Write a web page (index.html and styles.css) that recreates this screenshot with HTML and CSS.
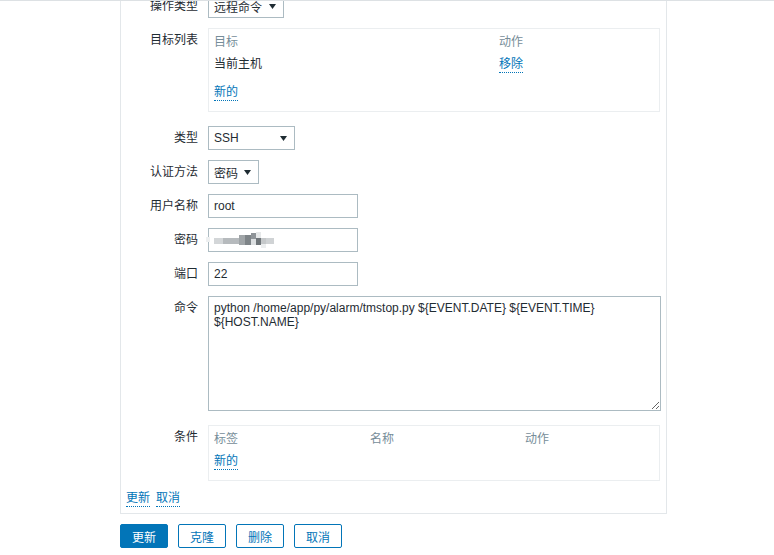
FILE: index.html
```html
<!DOCTYPE html>
<html lang="zh-CN">
<head>
    <meta charset="UTF-8">
    <meta name="viewport" content="width=device-width, initial-scale=1.0">
    <title>操作</title>
    <link rel="stylesheet" href="styles.css">
</head>
<body>
    <div class="viewport">
        <div class="container">
            <div class="form-row">
                <label>操作类型</label>
                <div class="field">
                    <span class="select w-op">远程命令<svg class="caret" width="7" height="5"><polygon points="0,0 7,0 3.5,5"/></svg></span>
                </div>
            </div>

            <div class="form-row row-table">
                <label>目标列表</label>
                <div class="field">
                    <div class="tbl">
                        <div class="tbl-head">
                            <span class="col-target">目标</span>
                            <span>动作</span>
                        </div>
                        <div class="tbl-row">
                            <span class="col-target">当前主机</span>
                            <a class="link">移除</a>
                        </div>
                        <div class="tbl-foot">
                            <a class="link">新的</a>
                        </div>
                    </div>
                </div>
            </div>

            <div class="form-row">
                <label>类型</label>
                <div class="field">
                    <span class="select w-type">SSH<svg class="caret" width="7" height="5"><polygon points="0,0 7,0 3.5,5"/></svg></span>
                </div>
            </div>

            <div class="form-row">
                <label>认证方法</label>
                <div class="field">
                    <span class="select w-auth">密码<svg class="caret" width="7" height="5"><polygon points="0,0 7,0 3.5,5"/></svg></span>
                </div>
            </div>

            <div class="form-row">
                <label>用户名称</label>
                <div class="field">
                    <input class="input" type="text" value="root">
                </div>
            </div>

            <div class="form-row">
                <label>密码</label>
                <div class="field">
                    <div class="input masked">
                        <!-- pixelated redaction of the password -->
                        <svg width="80" height="22" viewBox="0 0 80 22">
                            <rect x="0" y="7" width="4" height="5" fill="#eef0f1"/>
                            <rect x="8" y="8" width="9" height="6" fill="#d3d6d8"/>
                            <rect x="17" y="8" width="16" height="6" fill="#b6babd"/>
                            <rect x="33" y="5" width="6" height="10" fill="#a0a5a8"/>
                            <rect x="39" y="5" width="6" height="10" fill="#7e8488"/>
                            <rect x="45" y="3" width="5" height="6" fill="#8f9498"/>
                            <rect x="45" y="9" width="5" height="6" fill="#dcdfe1"/>
                            <rect x="50" y="2" width="5" height="6" fill="#e6e8e9"/>
                            <rect x="50" y="8" width="5" height="7" fill="#6f7579"/>
                            <rect x="55" y="8" width="5" height="6" fill="#c5c8ca"/>
                            <rect x="55" y="14" width="5" height="4" fill="#eceeef"/>
                            <rect x="60" y="8" width="8" height="6" fill="#d0d3d5"/>
                        </svg>
                    </div>
                </div>
            </div>

            <div class="form-row">
                <label>端口</label>
                <div class="field">
                    <input class="input" type="text" value="22">
                </div>
            </div>

            <div class="form-row row-textarea">
                <label>命令</label>
                <div class="field">
                    <textarea class="textarea">python /home/app/py/alarm/tmstop.py ${EVENT.DATE} ${EVENT.TIME} ${HOST.NAME}</textarea>
                </div>
            </div>

            <div class="form-row row-cond">
                <label>条件</label>
                <div class="field">
                    <div class="tbl">
                        <div class="tbl-head">
                            <span class="col-tag">标签</span>
                            <span class="col-name">名称</span>
                            <span>动作</span>
                        </div>
                        <div class="tbl-foot foot-short">
                            <a class="link">新的</a>
                        </div>
                    </div>
                </div>
            </div>

            <div class="form-links">
                <a class="link">更新</a>
                <a class="link">取消</a>
            </div>
        </div>

        <div class="buttons">
            <button class="btn btn-primary">更新</button>
            <button class="btn">克隆</button>
            <button class="btn">删除</button>
            <button class="btn">取消</button>
        </div>
    </div>
</body>
</html>
```

FILE: styles.css
```css
body {
    margin: 0;
    border-top: 1px solid #dde1e4;
    background: #fff;
    color: #1f2c33;
    font-family: "Liberation Sans", "Noto Sans CJK SC", sans-serif;
    font-size: 12px;
}

.viewport {
    height: 554px;
    overflow: hidden;
}

.container {
    width: 535px;
    margin: -7px 0 0 120px;
    padding: 0 5px 6px;
    border: 1px solid #e3e7ea;
    border-top: none;
}

.form-row {
    display: grid;
    grid-template-columns: 72px 452px;
    column-gap: 10px;
    margin-bottom: 10px;
}

.form-row label {
    text-align: right;
    padding-top: 5px;
    line-height: 14px;
}

.row-table,
.row-textarea {
    margin-bottom: 14px;
}

.row-cond {
    margin-bottom: 0;
}

.select {
    display: flex;
    align-items: center;
    justify-content: space-between;
    box-sizing: border-box;
    height: 24px;
    padding: 0 7px 0 5px;
    border: 1px solid #acbbc2;
    background: #fff;
}

.caret {
    fill: #1f2c33;
}

.w-op {
    width: 76px;
}

.w-type {
    width: 87px;
}

.w-auth {
    width: 51px;
}

.input {
    box-sizing: border-box;
    display: block;
    width: 150px;
    height: 24px;
    margin: 0;
    padding: 0 5px;
    border: 1px solid #acbbc2;
    color: #1f2c33;
    font: inherit;
    outline: none;
}

.masked {
    padding: 0;
    overflow: visible;
}

.masked svg {
    display: block;
    margin: 1px 0 0 -3px;
}

.textarea {
    box-sizing: border-box;
    display: block;
    width: 453px;
    height: 115px;
    margin: 0;
    padding: 4px 5px;
    border: 1px solid #acbbc2;
    color: #1f2c33;
    font: inherit;
    line-height: 14px;
    outline: none;
}

.tbl {
    border: 1px solid #ebeef0;
    padding: 0 5px;
    line-height: 14px;
}

.tbl-head {
    display: flex;
    padding: 6px 0 3px;
    color: #768d99;
}

.tbl-row {
    display: flex;
    align-items: flex-start;
    height: 14px;
    padding: 5px 0;
}

.tbl-foot {
    display: flex;
    padding: 9px 0 10px;
}

.foot-short {
    padding-top: 5px;
}

.col-target {
    width: 285px;
}

.col-tag {
    width: 156px;
}

.col-name {
    width: 155px;
}

.link {
    display: inline-block;
    line-height: 14px;
    padding-bottom: 1px;
    border-bottom: 1px dotted #0275b8;
    color: #0275b8;
    cursor: pointer;
}

.form-links {
    display: flex;
    gap: 6px;
    margin-top: 10px;
}

.buttons {
    display: flex;
    gap: 10px;
    margin: 10px 0 0 120px;
}

.btn {
    width: 48px;
    height: 24px;
    padding: 0;
    border: 1px solid #0275b8;
    border-radius: 2px;
    background: #fff;
    color: #0275b8;
    font-family: "Liberation Sans", "Noto Sans CJK SC", sans-serif;
    font-size: 12px;
    cursor: pointer;
}

.btn-primary {
    background: #0275b8;
    color: #fff;
}
```
